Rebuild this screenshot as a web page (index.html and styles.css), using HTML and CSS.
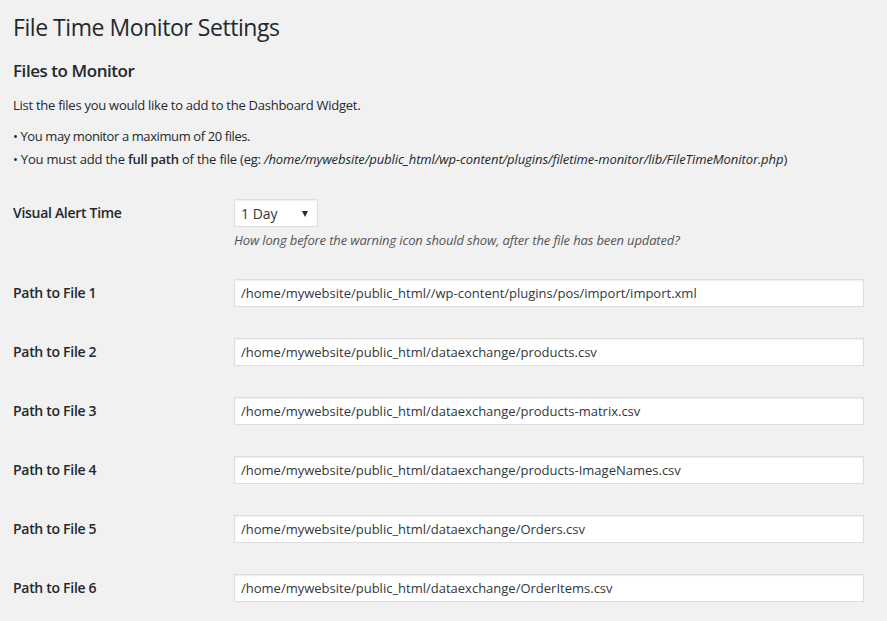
FILE: index.html
```html
<!DOCTYPE html>
<html lang="en">
<head>
<meta charset="utf-8">
<title>File Time Monitor Settings</title>
<link rel="stylesheet" href="styles.css">
</head>
<body>
<div class="wrap">
  <h1 class="page-title">File Time Monitor Settings</h1>
  <h2 class="section-title">Files to Monitor</h2>
  <p class="intro">List the files you would like to add to the Dashboard Widget.</p>
  <div class="notes">
    <div class="note note-limit">• You may monitor a maximum of 20 files.</div>
    <div class="note">• You must add the <strong>full path</strong> of the file (eg: <em>/home/mywebsite/public_html/wp-content/plugins/filetime-monitor/lib/FileTimeMonitor.php</em>)</div>
  </div>

  <div class="form">
    <div class="row row-alert">
      <label class="label">Visual Alert Time</label>
      <div class="control">
        <div class="select-wrap">
          <select class="select"><option>1 Day</option></select>
        </div>
        <p class="description">How long before the warning icon should show, after the file has been updated?</p>
      </div>
    </div>
    <div class="row">
      <label class="label">Path to File 1</label>
      <div class="control"><input class="text" type="text" value="/home/mywebsite/public_html//wp-content/plugins/pos/import/import.xml"></div>
    </div>
    <div class="row">
      <label class="label">Path to File 2</label>
      <div class="control"><input class="text" type="text" value="/home/mywebsite/public_html/dataexchange/products.csv"></div>
    </div>
    <div class="row">
      <label class="label">Path to File 3</label>
      <div class="control"><input class="text" type="text" value="/home/mywebsite/public_html/dataexchange/products-matrix.csv"></div>
    </div>
    <div class="row">
      <label class="label">Path to File 4</label>
      <div class="control"><input class="text" type="text" value="/home/mywebsite/public_html/dataexchange/products-ImageNames.csv"></div>
    </div>
    <div class="row">
      <label class="label">Path to File 5</label>
      <div class="control"><input class="text" type="text" value="/home/mywebsite/public_html/dataexchange/Orders.csv"></div>
    </div>
    <div class="row">
      <label class="label">Path to File 6</label>
      <div class="control"><input class="text" type="text" value="/home/mywebsite/public_html/dataexchange/OrderItems.csv"></div>
    </div>
  </div>
</div>
</body>
</html>
```
FILE: styles.css
```css
html, body {
  margin: 0;
  padding: 0;
  background: #f1f1f1;
}
body {
  font-family: "Open Sans", "Noto Sans", sans-serif;
  font-size: 13px;
  color: #23282d;
  overflow: hidden;
}
.wrap {
  padding: 13px 23px 0 13px;
}
.page-title {
  margin: 0;
  font-size: 23px;
  font-weight: 400;
  line-height: 29px;
  letter-spacing: -0.45px;
}
.section-title {
  margin: 18px 0 0;
  font-size: 17px;
  font-weight: 600;
  line-height: 22px;
  letter-spacing: -0.45px;
}
.intro {
  margin: 13px 0 0;
  line-height: 20px;
  letter-spacing: -0.26px;
}
.notes {
  margin-top: 10px;
  line-height: 23px;
  letter-spacing: -0.2px;
}
.note-limit {
  letter-spacing: -0.4px;
}
.notes strong {
  font-weight: 600;
}
.notes em {
  letter-spacing: -0.08px;
}
.form {
  margin-top: 28px;
}
.row {
  display: grid;
  grid-template-columns: 221px 1fr;
  margin-bottom: 31px;
}
.row-alert {
  margin-bottom: 30px;
}
.label {
  font-size: 14px;
  font-weight: 600;
  line-height: 28px;
  letter-spacing: -0.3px;
}
.select-wrap {
  position: relative;
  width: 84px;
}
.select-wrap::after {
  content: "";
  position: absolute;
  right: 10px;
  top: 12px;
  border-left: 3.5px solid transparent;
  border-right: 3.5px solid transparent;
  border-top: 6px solid #23282d;
  pointer-events: none;
}
.select {
  appearance: none;
  -webkit-appearance: none;
  display: block;
  width: 84px;
  height: 28px;
  margin: 0;
  padding: 0 0 0 6px;
  font-family: inherit;
  font-size: 14px;
  color: #32373c;
  background: #fff;
  border: 1px solid #ddd;
  border-radius: 0;
  box-shadow: inset 0 1px 2px rgba(0,0,0,.07);
}
.description {
  margin: 4px 0 0;
  font-style: italic;
  font-size: 13px;
  line-height: 18px;
  color: #555;
  letter-spacing: -0.14px;
}
.text {
  display: block;
  box-sizing: border-box;
  width: 630px;
  height: 28px;
  margin: 0;
  padding: 0 6px;
  font-family: inherit;
  font-size: 13px;
  color: #32373c;
  background: #fff;
  border: 1px solid #ddd;
  border-radius: 0;
  box-shadow: inset 0 1px 2px rgba(0,0,0,.07);
  outline: none;
}
```
